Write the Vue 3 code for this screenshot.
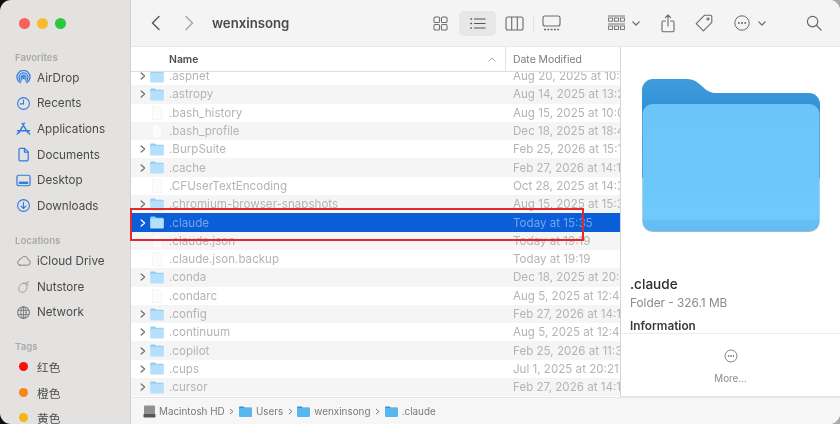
<script setup>
const favorites = ['AirDrop', 'Recents', 'Applications', 'Documents', 'Desktop', 'Downloads']
const locations = ['iCloud Drive', 'Nutstore', 'Network']
const tags = [
  { name: '红色', color: '#fb0f0c' },
  { name: '橙色', color: '#fb8510' },
  { name: '黄色', color: '#f5b70d' }
]
const rows = [
  { name: '.aspnet', date: 'Aug 20, 2025 at 10:32', dir: true },
  { name: '.astropy', date: 'Aug 14, 2025 at 13:27', dir: true },
  { name: '.bash_history', date: 'Aug 15, 2025 at 10:08', dir: false },
  { name: '.bash_profile', date: 'Dec 18, 2025 at 18:44', dir: false },
  { name: '.BurpSuite', date: 'Feb 25, 2026 at 15:12', dir: true },
  { name: '.cache', date: 'Feb 27, 2026 at 14:15', dir: true },
  { name: '.CFUserTextEncoding', date: 'Oct 28, 2025 at 14:36', dir: false },
  { name: '.chromium-browser-snapshots', date: 'Aug 15, 2025 at 15:31', dir: true },
  { name: '.claude', date: 'Today at 15:35', dir: true, selected: true },
  { name: '.claude.json', date: 'Today at 19:19', dir: false },
  { name: '.claude.json.backup', date: 'Today at 19:19', dir: false },
  { name: '.conda', date: 'Dec 18, 2025 at 20:51', dir: true },
  { name: '.condarc', date: 'Aug 5, 2025 at 12:47', dir: false },
  { name: '.config', date: 'Feb 27, 2026 at 14:13', dir: true },
  { name: '.continuum', date: 'Aug 5, 2025 at 12:45', dir: true },
  { name: '.copilot', date: 'Feb 25, 2026 at 11:33', dir: true },
  { name: '.cups', date: 'Jul 1, 2025 at 20:21', dir: true },
  { name: '.cursor', date: 'Feb 27, 2026 at 14:11', dir: true }
]
const crumbs = ['Users', 'wenxinsong', '.claude']
</script>

<template>
  <div class="desk">
    <div class="window">
      <aside class="sidebar">
        <div class="lights">
          <span class="light red"></span>
          <span class="light yellow"></span>
          <span class="light green"></span>
        </div>

        <div class="side-title first">Favorites</div>
        <div v-for="item in favorites" :key="item" class="side-item">
          <svg class="side-icon" viewBox="0 0 16 16" fill="none" stroke="#2f7ce0" stroke-width="1.2" stroke-linecap="round" stroke-linejoin="round">
            <template v-if="item === 'AirDrop'">
              <path d="M4.6 13.6A7 7 0 1 1 11.4 13.6" stroke-width="1.3" />
              <path d="M5.4 11.8A4.8 4.8 0 1 1 10.6 11.8" stroke-width="1.3" />
              <path d="M6.4 10A2.6 2.6 0 1 1 9.6 10" stroke-width="1.3" />
              <circle cx="8" cy="8" r="0.9" fill="#2f7ce0" />
            </template>
            <template v-else-if="item === 'Recents'">
              <circle cx="8" cy="8" r="6.3" />
              <path d="M8 4.2V8.4H4.6" />
            </template>
            <template v-else-if="item === 'Applications'">
              <path d="M8.8 2.2L3.4 12.4M6.6 2.6L12.6 12.4M1.6 10.4H14.4M1.2 14L2.8 12.2M14.6 14L13 12.2" stroke-width="1.5" />
            </template>
            <template v-else-if="item === 'Documents'">
              <path d="M3.2 2.8A1.4 1.4 0 0 1 4.6 1.4H9.2L13 5.2V13.4A1.4 1.4 0 0 1 11.6 14.8H4.6A1.4 1.4 0 0 1 3.2 13.4Z" stroke-width="1.3" />
              <path d="M9 1.6V5.4H12.8" stroke-width="1.3" />
            </template>
            <template v-else-if="item === 'Desktop'">
              <rect x="1" y="2.4" width="14" height="11.2" rx="2" stroke-width="1.3" />
              <rect x="3" y="9.2" width="10" height="2.6" fill="#2f7ce0" stroke="none" />
            </template>
            <template v-else>
              <circle cx="8" cy="8" r="6.3" />
              <path d="M8 4.6V11M5.4 8.6L8 11.2L10.6 8.6" />
            </template>
          </svg>
          <span>{{ item }}</span>
        </div>

        <div class="side-title">Locations</div>
        <div v-for="item in locations" :key="item" class="side-item">
          <svg class="side-icon" viewBox="0 0 16 16" fill="none" stroke="#7d7d7d" stroke-width="1" stroke-linecap="round" stroke-linejoin="round">
            <path v-if="item === 'iCloud Drive'" d="M4 13H12.4A2.9 2.9 0 0 0 13 7.3A3.8 3.8 0 0 0 6.1 5.3A3 3 0 0 0 3.7 7.6A2.8 2.8 0 0 0 4 13Z" />
            <template v-else-if="item === 'Nutstore'">
              <path d="M8.2 4.6C4.8 4.4 2.6 8 3 11.4C3.2 13.4 5.4 14.6 8 14C11 13.2 12.2 10.2 11.4 6.6C10.8 5.2 9.6 4.6 8.2 4.6Z" stroke="#9b9b9b" />
              <path d="M9.6 4.4L13.6 3.2M10.4 5L13 6.4" stroke="#9b9b9b" />
            </template>
            <template v-else>
              <circle cx="8" cy="8" r="6.2" stroke-width="1.2" />
              <ellipse cx="8" cy="8" rx="2.8" ry="6.2" />
              <path d="M2.2 5.8H13.8M2.2 10.2H13.8M8 1.8V14.2" />
            </template>
          </svg>
          <span>{{ item }}</span>
        </div>

        <div class="side-title tags-title">Tags</div>
        <div v-for="tag in tags" :key="tag.name" class="side-item">
          <span class="tag-box"><i class="tag-dot" :style="{ background: tag.color }"></i></span>
          <span>{{ tag.name }}</span>
        </div>
      </aside>

      <main class="main">
        <header class="toolbar">
          <button class="nav-btn">
            <svg width="12" height="16" viewBox="0 0 12 16" fill="none" stroke="#5c5c5c" stroke-width="1.5" stroke-linecap="round" stroke-linejoin="round"><path d="M9 1.5L2.5 8L9 14.5" /></svg>
          </button>
          <button class="nav-btn">
            <svg width="12" height="16" viewBox="0 0 12 16" fill="none" stroke="#a8a8a8" stroke-width="1.5" stroke-linecap="round" stroke-linejoin="round"><path d="M3 1.5L9.5 8L3 14.5" /></svg>
          </button>
          <h1 class="folder-title">wenxinsong</h1>

          <div class="views">
            <button class="tool">
              <svg width="15" height="15" viewBox="0 0 16 16" fill="none" stroke="#6a6a6a" stroke-width="1.1"><rect x="1" y="1" width="6" height="6" rx="1.5" /><rect x="9" y="1" width="6" height="6" rx="1.5" /><rect x="1" y="9" width="6" height="6" rx="1.5" /><rect x="9" y="9" width="6" height="6" rx="1.5" /></svg>
            </button>
            <button class="tool active">
              <svg width="16" height="13" viewBox="0 0 18 14" fill="none" stroke="#555" stroke-width="1.2" stroke-linecap="round"><path d="M5 2H17M5 7H17M5 12H17" /><path d="M1 2H1.6M1 7H1.6M1 12H1.6" stroke-width="1.7" /></svg>
            </button>
            <button class="tool">
              <svg width="19" height="15" viewBox="0 0 19 15" fill="none" stroke="#6a6a6a" stroke-width="1.1"><rect x="1" y="1" width="17" height="13" rx="2" /><path d="M6.7 1V14M12.3 1V14" /></svg>
            </button>
            <span class="view-sep"></span>
            <button class="tool">
              <svg width="19" height="16" viewBox="0 0 19 16" fill="none" stroke="#6a6a6a" stroke-width="1.1"><rect x="1" y="1" width="17" height="10" rx="2" /><path d="M2 14.5H17" stroke-width="1.6" stroke-dasharray="2 1.3" /></svg>
            </button>
          </div>

          <button class="tool group-btn">
            <svg width="17" height="17" viewBox="0 0 17 17" fill="none" stroke="#6a6a6a" stroke-width="0.9"><path d="M0 1H17M0 9H17" /><rect x="0.6" y="3" width="4" height="3.2" /><rect x="6.5" y="3" width="4" height="3.2" /><rect x="12.4" y="3" width="4" height="3.2" /><rect x="0.6" y="11" width="4" height="3.4" /><rect x="6.5" y="11" width="4" height="3.4" /><rect x="12.4" y="11" width="4" height="3.4" /></svg>
            <svg class="caret" width="8" height="5" viewBox="0 0 8 5" fill="none" stroke="#6a6a6a" stroke-width="1.2" stroke-linecap="round" stroke-linejoin="round"><path d="M0.8 0.8L4 4L7.2 0.8" /></svg>
          </button>
          <button class="tool share">
            <svg width="14" height="19" viewBox="0 0 14 19" fill="none" stroke="#6a6a6a" stroke-width="1.1" stroke-linecap="round" stroke-linejoin="round"><path d="M4.4 7H2.2A1.4 1.4 0 0 0 1 8.4V16.4A1.4 1.4 0 0 0 2.2 17.8H11.8A1.4 1.4 0 0 0 13 16.4V8.4A1.4 1.4 0 0 0 11.8 7H9.6M7 12V1.2M4.4 3.6L7 1L9.6 3.6" /></svg>
          </button>
          <button class="tool tagb">
            <svg width="18" height="18" viewBox="0 0 18 18" fill="none" stroke="#6a6a6a" stroke-width="1.1" stroke-linejoin="round"><path d="M9.6 1.2H15.4A1.4 1.4 0 0 1 16.8 2.6V8.4L8.4 16.8L1.2 9.6Z" /><circle cx="13" cy="5" r="1" /></svg>
          </button>
          <button class="tool more-btn">
            <svg width="16" height="16" viewBox="0 0 16 16" fill="none" stroke="#6a6a6a" stroke-width="1"><circle cx="8" cy="8" r="7.2" /><circle cx="4.8" cy="8" r=".6" fill="#6a6a6a" /><circle cx="8" cy="8" r=".6" fill="#6a6a6a" /><circle cx="11.2" cy="8" r=".6" fill="#6a6a6a" /></svg>
            <svg class="caret" width="8" height="5" viewBox="0 0 8 5" fill="none" stroke="#6a6a6a" stroke-width="1.2" stroke-linecap="round" stroke-linejoin="round"><path d="M0.8 0.8L4 4L7.2 0.8" /></svg>
          </button>
          <button class="tool search">
            <svg width="16" height="16" viewBox="0 0 16 16" fill="none" stroke="#6a6a6a" stroke-width="1.2" stroke-linecap="round"><circle cx="6.6" cy="6.6" r="5.2" /><path d="M10.5 10.5L15 15" /></svg>
          </button>
        </header>

        <div class="content">
          <section class="files">
            <div class="head">
              <div class="head-name">
                <span>Name</span>
                <svg width="8" height="5" viewBox="0 0 8 5" fill="none" stroke="#a5a5a5" stroke-width="1" stroke-linecap="round" stroke-linejoin="round"><path d="M0.8 4.2L4 1L7.2 4.2" /></svg>
              </div>
              <div class="head-date">Date Modified</div>
            </div>
            <div class="list">
              <div class="list-inner">
                <div v-for="row in rows" :key="row.name" class="row" :class="{ selected: row.selected }">
                  <span class="arrow">
                    <svg v-if="row.dir" width="6" height="8" viewBox="0 0 6 8" fill="none" stroke="currentColor" stroke-width="1.3" stroke-linecap="round" stroke-linejoin="round"><path d="M1.2 1L4.6 4L1.2 7" /></svg>
                  </span>
                  <svg v-if="row.dir" class="row-icon" viewBox="0 0 14 13" width="14" height="13">
                    <path d="M0.2 2A1.4 1.4 0 0 1 1.6 0.6H4.8L6.2 1.8H12.4A1.4 1.4 0 0 1 13.8 3.2V5H0.2Z" fill="#92cdf0" />
                    <rect x="0.2" y="2.8" width="13.6" height="9.8" rx="1.2" fill="#b4e0fb" />
                  </svg>
                  <svg v-else class="row-icon" viewBox="0 0 14 14" width="14" height="14">
                    <path d="M2.5 0.5H8.6L11.5 3.4V13.5H2.5Z" fill="#fcfcfc" stroke="#f1f1f1" stroke-width="0.7" />
                  </svg>
                  <span class="row-name">{{ row.name }}</span>
                  <span class="row-date">{{ row.date }}</span>
                </div>
              </div>
            </div>
          </section>

          <section class="preview">
            <svg class="big-folder" width="181" height="157" viewBox="0 0 181 157">
              <defs>
                <linearGradient id="backGrad" x1="0" y1="0" x2="0" y2="1">
                  <stop offset="0" stop-color="#3f9cdb" />
                  <stop offset="1" stop-color="#2389d0" />
                </linearGradient>
                <linearGradient id="frontGrad" x1="0" y1="0" x2="0" y2="1">
                  <stop offset="0" stop-color="#6dc4f8" />
                  <stop offset="0.84" stop-color="#6ec8fb" />
                  <stop offset="0.85" stop-color="#73c9fa" />
                  <stop offset="0.91" stop-color="#6fc6f8" />
                  <stop offset="0.92" stop-color="#65bff5" />
                  <stop offset="1" stop-color="#62bcf3" />
                </linearGradient>
              </defs>
              <path d="M1 12A11 11 0 0 1 12 1H46C54 1 57 5 62 9C66 13 70 15 76 15H168A11 11 0 0 1 179 26V60H1Z" fill="url(#backGrad)" />
              <rect x="1" y="60" width="178" height="40" fill="#2389d0" />
              <rect x="1.5" y="26" width="177" height="128" rx="10" fill="#5a7f97" opacity=".55" />
              <rect x="1.5" y="26" width="177" height="127" rx="10" fill="url(#frontGrad)" />
            </svg>
            <div class="info">
              <div class="info-name">.claude</div>
              <div class="info-kind">Folder - 326.1 MB</div>
              <div class="info-head">Information</div>
            </div>
            <div class="more">
              <svg width="14" height="14" viewBox="0 0 14 14" fill="none" stroke="#757575" stroke-width=".9"><circle cx="7" cy="7" r="6" /><circle cx="4.6" cy="7" r=".5" fill="#757575" /><circle cx="7" cy="7" r=".5" fill="#757575" /><circle cx="9.4" cy="7" r=".5" fill="#757575" /></svg>
              <span>More...</span>
            </div>
          </section>
        </div>

        <footer class="pathbar">
          <svg class="hd" width="13" height="13" viewBox="0 0 13 13"><rect x="1" y="0.5" width="11" height="9" rx="1" fill="#8f9092" /><rect x="0.5" y="9" width="12" height="3.5" rx="0.8" fill="#55565a" /></svg>
          <span>Macintosh HD</span>
          <template v-for="crumb in crumbs" :key="crumb">
            <svg class="sep" width="5" height="7" viewBox="0 0 5 7" fill="none" stroke="#7c7c7c" stroke-width="1"><path d="M1 1L4 3.5L1 6" /></svg>
            <svg class="crumb-icon" width="13" height="11" viewBox="0 0 13 11"><path d="M0 1.4A1 1 0 0 1 1 .4H4.4L5.6 1.4H12A1 1 0 0 1 13 2.4V4H0Z" fill="#2f93d8" /><rect y="2" width="13" height="9" rx="1" fill="#58b7ef" /></svg>
            <span>{{ crumb }}</span>
          </template>
        </footer>
      </main>
    </div>
    <div class="callout"></div>
  </div>
</template>

<style>
html, body {
  margin: 0;
  background: #111;
}
</style>

<style scoped>
.desk {
  position: relative;
  width: 840px;
  height: 424px;
  overflow: hidden;
  background: linear-gradient(90deg, #0c0c0c 0 50%, #a9a9a9 50%);
  font-family: Inter, "Noto Sans CJK SC", sans-serif;
  filter: blur(0.4px);
}

.window {
  display: flex;
  width: 840px;
  height: 424px;
  border-radius: 11px;
  overflow: hidden;
}

.sidebar {
  width: 131px;
  flex: none;
  box-sizing: border-box;
  background: #e3e2e1;
  border-right: 1px solid #d2d2d2;
  padding-top: 18px;
}

.lights {
  display: flex;
  gap: 7px;
  padding-left: 19px;
  height: 12px;
}

.light {
  width: 11px;
  height: 11px;
  border-radius: 50%;
}

.red { background: #f8605a; }
.yellow { background: #fbbb30; }
.green { background: #2bc840; }

.side-title {
  padding-left: 15px;
  margin-top: 15.6px;
  height: 14px;
  line-height: 14px;
  font-size: 9.6px;
  font-weight: 600;
  color: #a9a9a9;
}

.side-title.first { margin-top: 21px; }
.side-title.tags-title { margin-top: 15px; }

.side-item {
  display: flex;
  align-items: center;
  height: 25.6px;
  padding-left: 16px;
  font-size: 11.7px;
  color: #4b4b4b;
}

.side-icon {
  width: 15px;
  height: 15px;
  margin-right: 6px;
  flex: none;
}

.tag-box {
  display: flex;
  justify-content: center;
  width: 15px;
  margin-right: 6px;
}

.tag-dot {
  width: 9px;
  height: 9px;
  border-radius: 50%;
}

.main {
  flex: 1;
  min-width: 0;
  display: flex;
  flex-direction: column;
  background: #fff;
}

.toolbar {
  display: flex;
  align-items: center;
  height: 47px;
  flex: none;
  box-sizing: border-box;
  padding-left: 8px;
  padding-right: 8px;
  background: #f4f4f4;
  border-bottom: 1px solid #e9e9e9;
}

.nav-btn, .tool {
  display: flex;
  align-items: center;
  justify-content: center;
  padding: 0;
  border: 0;
  background: none;
}

.nav-btn {
  width: 33px;
  height: 30px;
}

.folder-title {
  margin: 0 0 0 7px;
  font-size: 13.2px;
  font-weight: 600;
  color: #4a4a4a;
}

.views {
  display: flex;
  align-items: center;
  margin-left: auto;
}

.tool {
  width: 37px;
  height: 25px;
  border-radius: 5px;
}

.tool.active { background: #e7e7e7; }

.view-sep {
  width: 1px;
  height: 17px;
  margin: 0 -0.5px;
  background: #e2e2e2;
}

.group-btn {
  width: 60px;
  margin-left: 20px;
  padding-left: 8px;
}

.caret { margin-left: 7px; }

.share { width: 36px; }
.tagb { width: 35px; }

.more-btn { width: 57px; }
.more-btn .caret { margin-left: 8px; }

.search {
  width: 36px;
  margin-left: 18px;
}

.content {
  flex: 1;
  min-height: 0;
  display: flex;
}

.files {
  flex: 1;
  min-width: 0;
  display: flex;
  flex-direction: column;
}

.head {
  display: flex;
  align-items: center;
  height: 25px;
  flex: none;
  box-sizing: border-box;
  border-bottom: 1px solid #dddddd;
  font-size: 10.4px;
}

.head-name {
  display: flex;
  align-items: center;
  justify-content: space-between;
  width: 375px;
  height: 100%;
  box-sizing: border-box;
  padding: 0 9px 0 38px;
  border-right: 1px solid #e2e2e2;
  font-weight: 600;
  color: #4e4e4e;
}

.head-date {
  padding-left: 7px;
  color: #7c7c7c;
}

.list {
  flex: 1;
  min-height: 0;
  overflow: hidden;
}

.list-inner {
  margin-top: -5px;
}

.row {
  display: flex;
  align-items: center;
  height: 18.3px;
  font-size: 11.6px;
  color: #b4b4b4;
  background: #fff;
}

.row:nth-child(even) { background: #f5f5f5; }

.row.selected {
  background: #0a5ed7;
  color: #77a5ea;
}

.arrow {
  display: flex;
  justify-content: center;
  width: 15px;
  margin-left: 4px;
  color: #707070;
  flex: none;
}

.selected .arrow { color: #fff; }

.row-icon {
  flex: none;
  margin-right: 5px;
}

.row-name {
  width: 344px;
  flex: none;
  white-space: nowrap;
}

.row-date {
  flex: none;
  width: 107px;
  overflow: hidden;
  white-space: nowrap;
}

.preview {
  width: 220px;
  flex: none;
  box-sizing: border-box;
  display: flex;
  flex-direction: column;
  background: #fff;
  border-left: 1px solid #d4d4d4;
  border-bottom: 1px solid #e6e6e6;
}

.big-folder {
  margin: 31px 0 0 20px;
  flex: none;
}

.info {
  flex: 1;
  min-height: 0;
  padding: 41px 0 0 9px;
}

.info-name {
  font-size: 13.6px;
  font-weight: 500;
  line-height: 17px;
  color: #2c2c2c;
}

.info-kind {
  margin-top: 2px;
  font-size: 11.8px;
  line-height: 16px;
  color: #8a8a8a;
}

.info-head {
  margin-top: 7px;
  font-size: 11.8px;
  font-weight: 600;
  line-height: 16px;
  color: #3a3a3a;
}

.more {
  height: 63px;
  flex: none;
  box-sizing: border-box;
  display: flex;
  flex-direction: column;
  align-items: center;
  padding-top: 15px;
  gap: 10px;
  border-top: 1px solid #ececec;
  font-size: 9.8px;
  color: #8b8b8b;
}

.pathbar {
  display: flex;
  align-items: center;
  height: 27px;
  flex: none;
  box-sizing: border-box;
  padding: 0 0 0 12px;
  background: #f6f6f6;
  border-top: 1px solid #e6e6e6;
  font-size: 9.9px;
  color: #7a7a7a;
}

.hd { margin-right: 3px; }
.sep { margin: 0 4.6px; }
.crumb-icon { margin-right: 4px; }

.callout {
  position: absolute;
  left: 130px;
  top: 208px;
  width: 450px;
  height: 29px;
  border: 2px solid #e5282c;
  pointer-events: none;
}
</style>
